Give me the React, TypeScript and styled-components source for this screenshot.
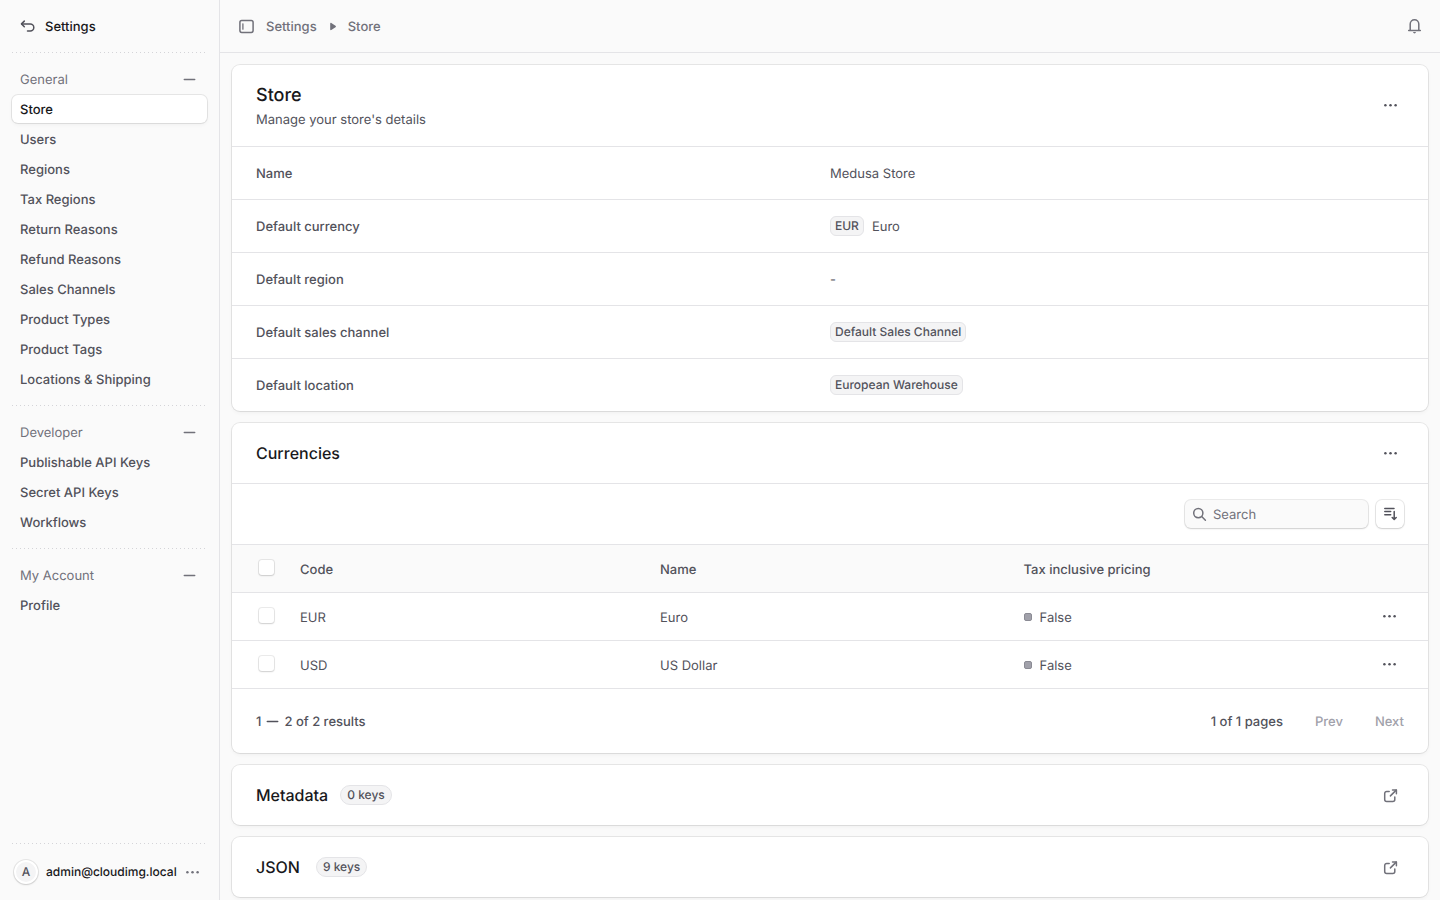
import React from 'react';
import styled, { createGlobalStyle, css } from 'styled-components';

const color = {
  base: '#18181b',
  subtle: '#52525b',
  muted: '#71717a',
  disabled: '#a1a1aa',
  border: '#e4e4e7',
  borderStrong: '#d4d4d8',
  page: '#fafafa',
  card: '#ffffff',
  component: '#f4f4f5',
};

const shadow = {
  card: '0 0 0 1px rgba(0, 0, 0, 0.08), 0 1px 2px -1px rgba(0, 0, 0, 0.08), 0 2px 4px 0 rgba(0, 0, 0, 0.04)',
  control: '0 0 0 1px rgba(0, 0, 0, 0.08), 0 1px 2px 0 rgba(0, 0, 0, 0.12)',
};

const GlobalStyle = createGlobalStyle`
  *, *::before, *::after { box-sizing: border-box; }
  body {
    margin: 0;
    background: ${color.page};
    color: ${color.subtle};
    font: 400 13px/22px Inter, "Liberation Sans", sans-serif;
    text-rendering: geometricPrecision;
    -webkit-font-smoothing: antialiased;
  }
  h1, h2, p, dl, dd, ul, ol { margin: 0; padding: 0; }
  ul, ol { list-style: none; }
  a { color: inherit; text-decoration: none; }
  button, input { font: inherit; color: inherit; text-rendering: inherit; }
  svg { display: block; flex: none; }
`;

/* Icons */

const Icon = ({ children }: { children: React.ReactNode }) => (
  <svg
    width="15"
    height="15"
    viewBox="0 0 15 15"
    fill="none"
    stroke="currentColor"
    strokeWidth="1.5"
    strokeLinecap="round"
    strokeLinejoin="round"
    aria-hidden="true"
  >
    {children}
  </svg>
);

const BackIcon = () => (
  <Icon>
    <path d="M4.3 2.1 1.5 4.9l2.8 2.8" />
    <path d="M1.7 4.9h8.6a3.5 3.5 0 0 1 3.5 3.5 3.5 3.5 0 0 1-3.5 3.5H7.5" />
  </Icon>
);

const SidebarIcon = () => (
  <Icon>
    <rect x="0.9" y="1.6" width="13.2" height="11.8" rx="1.8" />
    <path d="M3.9 4.8v5.4" strokeWidth="1.3" />
  </Icon>
);

const TriangleIcon = () => (
  <Icon>
    <path
      d="M5.2 4.5v6c0 .6.6.9 1.1.6l4.2-2.9a.8.8 0 0 0 0-1.4L6.3 3.9c-.5-.3-1.1 0-1.1.6Z"
      fill="currentColor"
      stroke="none"
    />
  </Icon>
);

const BellIcon = () => (
  <Icon>
    <path d="M1.7 11.5h11.6" />
    <path d="M3.2 11.3V5.1a4.3 4.3 0 0 1 8.6 0v6.2" />
    <path d="M6 13.1h3c-.2.8-.8 1.3-1.5 1.3S6.2 13.9 6 13.1Z" fill="currentColor" stroke="none" />
  </Icon>
);

const MinusIcon = () => (
  <Icon>
    <path d="M2.3 7.5h10.4" />
  </Icon>
);

const DotsIcon = () => (
  <Icon>
    <g fill="currentColor" stroke="none">
      <circle cx="2.4" cy="7.2" r="1.25" />
      <circle cx="7.5" cy="7.2" r="1.25" />
      <circle cx="12.6" cy="7.2" r="1.25" />
    </g>
  </Icon>
);

const SearchIcon = () => (
  <Icon>
    <circle cx="6.3" cy="6.1" r="4.6" />
    <path d="m9.7 9.5 3.7 3.7" />
  </Icon>
);

const SortIcon = () => (
  <Icon>
    <path d="M1.8 1.5h9.2M1.8 4.6h5.9M1.8 7.7h5.9" />
    <path d="M11.2 4.6v7.4M9.2 10.5l2 2 2-2" />
  </Icon>
);

const OpenIcon = () => (
  <Icon>
    <path d="M9.5 1.9h3.9v3.9" />
    <path d="M13.2 2.1 7.4 7.9" />
    <path d="M6.2 3.5H3.7a2 2 0 0 0-2 2v6.1a2 2 0 0 0 2 2h6.1a2 2 0 0 0 2-2V9.1" />
  </Icon>
);

/* Shell */

const Shell = styled.div`
  display: flex;
  height: 100vh;
`;

const Sidebar = styled.aside`
  display: flex;
  flex: none;
  flex-direction: column;
  width: 220px;
  padding: 0 12px;
  border-right: 1px solid ${color.border};
`;

const Label = styled.span`
  display: block;
  padding-top: 2px;
`;

const BackLink = styled.a`
  display: flex;
  align-items: center;
  gap: 10px;
  height: 52px;
  padding: 0 8px;
  color: ${color.subtle};

  ${Label} {
    color: ${color.base};
    font-weight: 500;
  }
`;

const Divider = styled.div`
  flex: none;
  height: 1px;
  background: linear-gradient(90deg, ${color.borderStrong} 1px, transparent 1px) 0 0 / 4px 1px;
`;

const Nav = styled.nav`
  flex: 1;
  min-height: 0;
  overflow-y: auto;
  margin: 0 -12px;
  padding: 0 12px;
  scrollbar-width: none;
`;

const NavSection = styled.section`
  padding: 12px 0;
`;

const NavHeading = styled.div`
  display: flex;
  align-items: center;
  justify-content: space-between;
  height: 28px;
  padding: 0 8px;
  color: ${color.muted};
`;

const IconButton = styled.button<{ $small?: boolean; $raised?: boolean; $strong?: boolean }>`
  display: inline-flex;
  flex: none;
  align-items: center;
  justify-content: center;
  width: ${(p) => (p.$small ? 20 : 28)}px;
  height: ${(p) => (p.$small ? 20 : 28)}px;
  padding: 0;
  border: 0;
  border-radius: 6px;
  background: transparent;
  color: ${(p) => (p.$strong ? color.subtle : color.muted)};
  cursor: pointer;
  ${(p) =>
    p.$raised &&
    css`
      background: ${color.card};
      box-shadow: ${shadow.control};
    `}
`;

const NavList = styled.ul`
  display: grid;
  gap: 2px;
  padding-top: 2px;
`;

const NavLink = styled.a<{ $active?: boolean }>`
  display: block;
  padding: 4px 8px 2px;
  border-radius: 6px;
  font-weight: 500;
  ${(p) =>
    p.$active &&
    css`
      background: ${color.card};
      color: ${color.base};
      box-shadow: ${shadow.card};
    `}
`;

const UserButton = styled.button`
  display: flex;
  align-items: center;
  gap: 8px;
  height: 32px;
  margin: 12px 0;
  padding: 0 8px 0 2px;
  border: 0;
  border-radius: 6px;
  background: transparent;
  color: ${color.muted};
  line-height: 20px;
  cursor: pointer;
`;

const Avatar = styled.span`
  display: flex;
  flex: none;
  align-items: center;
  justify-content: center;
  width: 24px;
  height: 24px;
  border: 2px solid ${color.card};
  border-radius: 50%;
  background: ${color.component};
  box-shadow: ${shadow.control};
  color: ${color.subtle};
  font-size: 12px;
  font-weight: 500;
`;

const UserName = styled.span`
  color: ${color.base};
  font-size: 12px;
  font-weight: 500;
`;

const Column = styled.div`
  display: flex;
  flex: 1;
  flex-direction: column;
  min-width: 0;
`;

const TopBar = styled.header`
  display: flex;
  flex: none;
  align-items: center;
  justify-content: space-between;
  height: 53px;
  padding: 0 12px;
  border-bottom: 1px solid ${color.border};
  color: ${color.muted};
`;

const TopBarStart = styled.div`
  display: flex;
  align-items: center;
  gap: 6px;
`;

const Crumbs = styled.ol`
  display: flex;
  align-items: center;
  gap: 8px;
  font-weight: 500;

  li {
    display: flex;
    align-items: center;
    gap: 8px;
  }
`;

const Main = styled.main`
  display: flex;
  flex: 1;
  flex-direction: column;
  gap: 12px;
  min-height: 0;
  padding: 12px;
  overflow-y: auto;
  scrollbar-width: none;
`;

/* Cards */

const Card = styled.section`
  flex: none;
  border-radius: 8px;
  background: ${color.card};
  box-shadow: ${shadow.card};
`;

const CardHeader = styled.div`
  display: flex;
  align-items: center;
  justify-content: space-between;
  padding: 16px 24px;
`;

const PageTitle = styled.h1`
  color: ${color.base};
  font-size: 18px;
  font-weight: 500;
  line-height: 29px;
`;

const Subtitle = styled.p`
  height: 20px;
  line-height: 21px;
`;

const CardTitle = styled.h2`
  color: ${color.base};
  font-size: 16px;
  font-weight: 500;
  line-height: 28px;
`;

const TitleGroup = styled.div<{ $gap: number }>`
  display: flex;
  align-items: center;
  gap: ${(p) => p.$gap}px;
`;

const Badge = styled.span<{ $rounded?: boolean }>`
  display: inline-block;
  padding: 0 ${(p) => (p.$rounded ? 6 : 4)}px;
  border: 1px solid ${color.border};
  border-radius: ${(p) => (p.$rounded ? 10 : 6)}px;
  background: ${color.component};
  font-size: 12px;
  font-weight: 500;
  line-height: 18px;
`;

const Detail = styled.div`
  display: grid;
  grid-template-columns: 1fr 1fr;
  align-items: start;
  padding: 16px 24px 14px;
  border-top: 1px solid ${color.border};

  dt {
    font-weight: 500;
  }

  dd {
    display: flex;
    align-items: flex-start;
    gap: 8px;
  }
`;

const Toolbar = styled.div`
  display: flex;
  justify-content: flex-end;
  gap: 8px;
  padding: 16px 24px;
  border-top: 1px solid ${color.border};
`;

const SearchField = styled.label`
  display: flex;
  align-items: center;
  gap: 6px;
  width: 183px;
  height: 28px;
  padding: 0 7px;
  border-radius: 6px;
  background: ${color.page};
  box-shadow: ${shadow.control};
  color: ${color.muted};

  input {
    flex: 1;
    min-width: 0;
    padding: 2px 0 0;
    border: 0;
    outline: 0;
    background: transparent;
  }

  input::placeholder {
    color: ${color.muted};
    opacity: 1;
  }

  input::-webkit-search-cancel-button {
    display: none;
  }
`;

const Table = styled.table`
  width: 100%;
  border-spacing: 0;
  table-layout: fixed;

  thead tr {
    background: ${color.page};
  }

  th,
  td {
    height: 48px;
    padding: 3px 0 0;
    border-top: 1px solid ${color.border};
    text-align: left;
  }

  th {
    font-weight: 500;
  }

  th:first-child,
  td:first-child {
    padding: 0 0 0 24px;
  }

  td:last-child {
    padding: 0 25px 0 0;
  }
`;

const SelectCol = styled.col`
  width: 68px;
`;

const DataCol = styled.col<{ $share: number }>`
  width: ${(p) => p.$share}%;
`;

const RestCol = styled.col``;

const ActionCol = styled.col`
  width: 72px;
`;

const Checkbox = styled.input.attrs({ type: 'checkbox' })`
  display: block;
  width: 15px;
  height: 15px;
  margin: 0 3px 2px;
  border-radius: 3px;
  background: ${color.card};
  box-shadow: ${shadow.control};
  appearance: none;
`;

const RowActions = styled.div`
  display: flex;
  justify-content: flex-end;
`;

const Status = styled.span`
  display: flex;
  align-items: center;
  gap: 8px;

  &::before {
    content: '';
    width: 8px;
    height: 8px;
    margin-bottom: 2px;
    border: 1px solid #8b8b94;
    border-radius: 2px;
    background: ${color.disabled};
  }
`;

const Pagination = styled.div`
  display: flex;
  align-items: center;
  justify-content: space-between;
  padding: 22px 24px 20px;
  border-top: 1px solid ${color.border};
  font-weight: 500;

  svg {
    margin-bottom: 1px;
  }
`;

const Range = styled.div`
  display: flex;
  align-items: center;
  gap: 4px;
`;

const Pages = styled.div`
  display: flex;
  gap: 32px;
`;

const PageButton = styled.button`
  padding: 0;
  border: 0;
  background: transparent;
  font-weight: 500;

  &:disabled {
    color: ${color.disabled};
  }
`;

/* Content */

const sections = [
  {
    title: 'General',
    items: [
      'Store',
      'Users',
      'Regions',
      'Tax Regions',
      'Return Reasons',
      'Refund Reasons',
      'Sales Channels',
      'Product Types',
      'Product Tags',
      'Locations & Shipping',
    ],
  },
  { title: 'Developer', items: ['Publishable API Keys', 'Secret API Keys', 'Workflows'] },
  { title: 'My Account', items: ['Profile'] },
];

const details: { label: string; badge?: string; text?: string }[] = [
  { label: 'Name', text: 'Medusa Store' },
  { label: 'Default currency', badge: 'EUR', text: 'Euro' },
  { label: 'Default region', text: '-' },
  { label: 'Default sales channel', badge: 'Default Sales Channel' },
  { label: 'Default location', badge: 'European Warehouse' },
];

const currencies = [
  { code: 'EUR', name: 'Euro', taxInclusive: 'False' },
  { code: 'USD', name: 'US Dollar', taxInclusive: 'False' },
];

const SettingsSidebar = () => (
  <Sidebar>
    <BackLink href="#back">
      <BackIcon />
      <Label>Settings</Label>
    </BackLink>
    <Divider />
    <Nav aria-label="Settings">
      {sections.map((section, index) => (
        <React.Fragment key={section.title}>
          {index > 0 && <Divider />}
          <NavSection>
            <NavHeading>
              <Label>{section.title}</Label>
              <IconButton $small type="button" aria-label={`Collapse ${section.title}`}>
                <MinusIcon />
              </IconButton>
            </NavHeading>
            <NavList>
              {section.items.map((item) => (
                <li key={item}>
                  <NavLink
                    href="#settings"
                    $active={item === 'Store'}
                    aria-current={item === 'Store' ? 'page' : undefined}
                  >
                    {item}
                  </NavLink>
                </li>
              ))}
            </NavList>
          </NavSection>
        </React.Fragment>
      ))}
    </Nav>
    <Divider />
    <UserButton type="button">
      <Avatar>A</Avatar>
      <UserName>admin@cloudimg.local</UserName>
      <DotsIcon />
    </UserButton>
  </Sidebar>
);

const StoreCard = () => (
  <Card>
    <CardHeader>
      <div>
        <PageTitle>Store</PageTitle>
        <Subtitle>Manage your store's details</Subtitle>
      </div>
      <IconButton $strong type="button" aria-label="Store actions">
        <DotsIcon />
      </IconButton>
    </CardHeader>
    <dl>
      {details.map((row) => (
        <Detail key={row.label}>
          <dt>{row.label}</dt>
          <dd>
            {row.badge && <Badge>{row.badge}</Badge>}
            {row.text && <span>{row.text}</span>}
          </dd>
        </Detail>
      ))}
    </dl>
  </Card>
);

const CurrenciesCard = () => (
  <Card>
    <CardHeader>
      <CardTitle>Currencies</CardTitle>
      <IconButton $strong type="button" aria-label="Currency actions">
        <DotsIcon />
      </IconButton>
    </CardHeader>
    <Toolbar>
      <SearchField>
        <SearchIcon />
        <input type="search" placeholder="Search" aria-label="Search currencies" />
      </SearchField>
      <IconButton $raised $strong type="button" aria-label="Sort">
        <SortIcon />
      </IconButton>
    </Toolbar>
    <Table>
      <colgroup>
        <SelectCol />
        <DataCol $share={30.1} />
        <DataCol $share={30.4} />
        <RestCol />
        <ActionCol />
      </colgroup>
      <thead>
        <tr>
          <th>
            <Checkbox aria-label="Select all" />
          </th>
          <th scope="col">Code</th>
          <th scope="col">Name</th>
          <th scope="col">Tax inclusive pricing</th>
          <td />
        </tr>
      </thead>
      <tbody>
        {currencies.map((currency) => (
          <tr key={currency.code}>
            <td>
              <Checkbox aria-label={`Select ${currency.code}`} />
            </td>
            <td>{currency.code}</td>
            <td>{currency.name}</td>
            <td>
              <Status>{currency.taxInclusive}</Status>
            </td>
            <td>
              <RowActions>
                <IconButton $strong type="button" aria-label={`${currency.code} actions`}>
                  <DotsIcon />
                </IconButton>
              </RowActions>
            </td>
          </tr>
        ))}
      </tbody>
    </Table>
    <Pagination>
      <Range>
        <span>1</span>
        <MinusIcon />
        <span>2 of 2 results</span>
      </Range>
      <Pages>
        <span>1 of 1 pages</span>
        <PageButton type="button" disabled>
          Prev
        </PageButton>
        <PageButton type="button" disabled>
          Next
        </PageButton>
      </Pages>
    </Pagination>
  </Card>
);

const KeysCard = ({ title, count, gap }: { title: string; count: number; gap: number }) => (
  <Card>
    <CardHeader>
      <TitleGroup $gap={gap}>
        <CardTitle>{title}</CardTitle>
        <Badge $rounded>{count} keys</Badge>
      </TitleGroup>
      <IconButton type="button" aria-label={`Open ${title}`}>
        <OpenIcon />
      </IconButton>
    </CardHeader>
  </Card>
);

export default function App() {
  return (
    <>
      <GlobalStyle />
      <Shell>
        <SettingsSidebar />
        <Column>
          <TopBar>
            <TopBarStart>
              <IconButton type="button" aria-label="Toggle sidebar">
                <SidebarIcon />
              </IconButton>
              <nav aria-label="Breadcrumb">
                <Crumbs>
                  <li>
                    <a href="#settings">
                      <Label>Settings</Label>
                    </a>
                    <TriangleIcon />
                  </li>
                  <li aria-current="page">
                    <Label>Store</Label>
                  </li>
                </Crumbs>
              </nav>
            </TopBarStart>
            <IconButton type="button" aria-label="Notifications">
              <BellIcon />
            </IconButton>
          </TopBar>
          <Main>
            <StoreCard />
            <CurrenciesCard />
            <KeysCard title="Metadata" count={0} gap={12} />
            <KeysCard title="JSON" count={9} gap={16} />
          </Main>
        </Column>
      </Shell>
    </>
  );
}
